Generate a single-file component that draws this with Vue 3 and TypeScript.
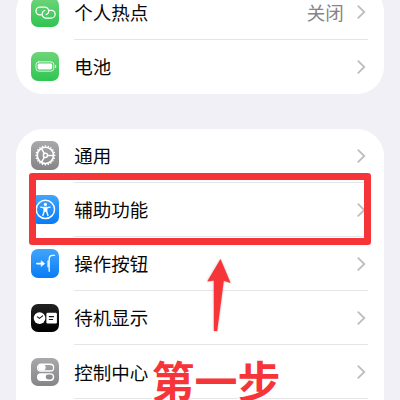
<script setup lang="ts">
type IconName = 'link' | 'battery' | 'gear' | 'access' | 'action' | 'standby' | 'control'

interface Row {
  label: string
  icon: IconName
  tone: 'green' | 'gray' | 'blue' | 'black'
  value?: string
}

const groups: Row[][] = [
  [
    { label: '个人热点', icon: 'link', tone: 'green', value: '关闭' },
    { label: '电池', icon: 'battery', tone: 'green' },
  ],
  [
    { label: '通用', icon: 'gear', tone: 'gray' },
    { label: '辅助功能', icon: 'access', tone: 'blue' },
    { label: '操作按钮', icon: 'action', tone: 'blue' },
    { label: '待机显示', icon: 'standby', tone: 'black' },
    { label: '控制中心', icon: 'control', tone: 'gray' },
  ],
]

const teeth = Array.from({ length: 20 }, (_, i) => i * 18)
</script>

<template>
  <main class="screen">
    <section v-for="(rows, g) in groups" :key="g" class="group">
      <div v-for="row in rows" :key="row.label" class="row">
        <span class="tile" :class="row.tone">
          <svg viewBox="0 0 29 29" fill="none" stroke="#fff" stroke-linecap="round" stroke-linejoin="round">
            <g v-if="row.icon === 'link'" stroke-width="1.25">
              <path d="M10.4 17 H8.9 A3.9 3.9 0 0 1 8.9 9.2 H14 A3.9 3.9 0 0 1 17.5 14.8 Q16.8 16.4 15.2 16.8" />
              <path d="M18.6 12.4 H20.4 A3.9 3.9 0 0 1 20.4 20.2 H15 A3.9 3.9 0 0 1 11.6 14.5 Q12.3 13 13.9 12.6" />
            </g>
            <g v-else-if="row.icon === 'battery'">
              <rect x="5" y="9.9" width="18" height="9.4" rx="2.9" stroke-width="1" stroke-opacity=".8" />
              <rect x="6.7" y="11.6" width="14.6" height="6" rx="1.4" fill="#fff" stroke="none" />
              <path d="M24.8 13.5v2.2" stroke-width="1.1" stroke-opacity=".8" />
            </g>
            <g v-else-if="row.icon === 'gear'">
              <circle cx="14.5" cy="14.5" r="8.2" stroke-width="1.7" />
              <path
                v-for="t in teeth" :key="t" d="M14.5 5.8V4.4" stroke-width="1.4" stroke-linecap="butt"
                :transform="`rotate(${t} 14.5 14.5)`"
              />
              <circle cx="14.5" cy="14.5" r="2.1" stroke-width="1.4" />
              <path d="M16.7 14.5H22.5M13.4 12.6L10.5 7.5M13.4 16.4L10.5 21.5" stroke-width="1.5" />
            </g>
            <g v-else-if="row.icon === 'access'">
              <circle cx="14.5" cy="14.5" r="9.2" stroke-width="1.5" />
              <circle cx="14.5" cy="9.5" r="1.6" fill="#fff" stroke="none" />
              <path d="M9.8 12.2L13 12.8H16L19.2 12.2" stroke-width="1.4" />
              <path d="M13.2 12.5h2.6v4.1l1.3 4M13.2 12.5v4.1l-1.3 4M14.5 13v3.4" stroke-width="1.4" />
            </g>
            <g v-else-if="row.icon === 'action'">
              <path d="M5.9 14.7H11.8" stroke-width="1.6" />
              <path d="M10.5 12L13.8 14.7L10.5 17.4Z" fill="#fff" stroke-width=".6" />
              <path d="M23.7 6.4H21.8Q18.3 6.4 18.3 10V22.5" stroke-width="1.3" />
              <path d="M17.2 12.1V18" stroke-width="1.3" />
            </g>
            <g v-else-if="row.icon === 'standby'">
              <circle cx="8.6" cy="14.2" r="5.9" fill="#fff" stroke="none" />
              <path d="M6.4 12.9L8.5 14.5L11.7 12" stroke="#171717" stroke-width="1.1" />
              <rect x="15.5" y="8.7" width="10.6" height="11" rx="1.4" fill="#fff" stroke="none" />
              <path d="M18 12.7h5.1M18 15.6h4.2" stroke="#171717" stroke-width="1.2" stroke-linecap="butt" />
            </g>
            <g v-else>
              <rect x="6.6" y="6.3" width="16.2" height="6.8" rx="3.4" stroke-width="1.3" />
              <rect x="7.2" y="6.9" width="7.6" height="5.6" rx="2.5" fill="#fff" stroke="none" />
              <rect x="6" y="15.3" width="17.4" height="7.8" rx="3.9" fill="#fff" stroke="none" />
              <rect x="14.8" y="16.7" width="7.2" height="5" rx="2.5" fill="#8e8e91" stroke="none" />
            </g>
          </svg>
        </span>
        <div class="content">
          <span class="label">{{ row.label }}</span>
          <span v-if="row.value" class="value">{{ row.value }}</span>
          <svg class="chevron" viewBox="0 0 9 14" fill="none">
            <path d="M1.3 1.1L7.3 7L1.3 12.9" stroke="#bdbdbf" stroke-width="1.8" stroke-linecap="round" />
          </svg>
        </div>
      </div>
    </section>

    <div class="highlight"></div>
    <svg class="arrow" viewBox="0 0 30 78">
      <path d="M15.5 4L25.6 28L18.8 25.8L12.2 76H8.9L8.8 25.4L2.2 26.6Z" fill="#f63539" />
    </svg>
    <div class="step">第一步</div>
  </main>
</template>

<style>
body {
  margin: 0;
  background: #f1f0f6;
}
</style>

<style scoped>
.screen {
  position: relative;
  display: flex;
  flex-direction: column;
  box-sizing: border-box;
  width: 400px;
  height: 400px;
  padding: 0 16px;
  overflow: hidden;
  background: #f1f0f6;
  font-family: "Noto Sans CJK SC", sans-serif;
}

.group {
  flex: none;
  overflow: hidden;
  border-radius: 27px;
  background: #fff;
}

.group:first-child {
  margin-top: -14.6px;
  margin-bottom: 35px;
}

.group:nth-child(2) {
  border-radius: 27px 27px 0 0;
  padding-bottom: 4px;
}

.row {
  display: flex;
  align-items: center;
  height: 54.1px;
  padding-left: 14.5px;
}

.tile {
  flex: none;
  width: 28.8px;
  height: 28.8px;
  margin-right: 15px;
  border-radius: 7px;
}

.tile svg {
  display: block;
  width: 100%;
  height: 100%;
}

.green { background: linear-gradient(#6dd578, #2fc552); }
.gray { background: linear-gradient(#a9a9ab, #858588); }
.blue { background: linear-gradient(#41a5fc, #087cf5); }
.black { background: linear-gradient(#222, #000); }

.content {
  display: flex;
  align-items: center;
  flex: 1;
  box-sizing: border-box;
  height: 100%;
  margin-right: 16px;
  padding: 1px 2.2px 0 0;
  border-bottom: 1px solid #e6e6e8;
}

.group:first-child .row:last-child .content {
  border-bottom-color: transparent;
}

.label,
.value {
  padding-bottom: 1px;
  font-size: 18.5px;
  line-height: 26px;
}

.label {
  flex: 1;
  color: #080808;
}

.value {
  margin-right: 13px;
  color: #858587;
}

.chevron {
  width: 9px;
  height: 14px;
}

.highlight {
  position: absolute;
  left: 28.5px;
  top: 172.5px;
  box-sizing: border-box;
  width: 342.5px;
  height: 72px;
  border: 7px solid #f63539;
  border-radius: 3px;
}

.arrow {
  position: absolute;
  left: 205px;
  top: 255px;
  width: 30px;
  height: 78px;
  filter: drop-shadow(0 0 1px rgb(90 40 40 / 40%));
}

.step {
  position: absolute;
  left: 151.5px;
  top: 349px;
  color: #f63539;
  font-size: 43px;
  font-weight: 700;
  line-height: 60px;
  white-space: nowrap;
  -webkit-text-stroke: 3px #fff;
  paint-order: stroke fill;
}
</style>
